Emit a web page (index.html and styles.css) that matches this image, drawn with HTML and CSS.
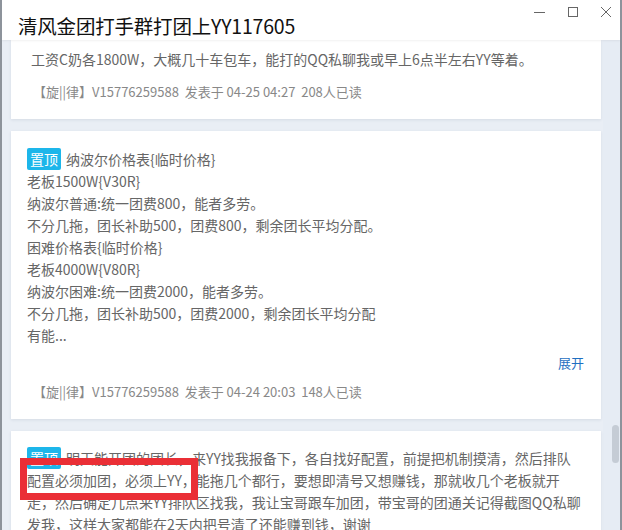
FILE: index.html
```html
<!DOCTYPE html>
<html lang="zh-CN">
<head>
<meta charset="utf-8">
<title>清风金团打手群打团上YY117605</title>
<link rel="stylesheet" href="styles.css">
</head>
<body>
<div class="window">
  <header class="titlebar">
    <div class="title">清风金团打手群打团上YY117605</div>
    <div class="controls">
      <svg class="ctl" width="14" height="14" viewBox="0 0 14 14"><path d="M1 7.5H12" stroke="#666" stroke-width="1" fill="none"/></svg>
      <svg class="ctl" width="14" height="14" viewBox="0 0 14 14"><rect x="2.5" y="2.5" width="9" height="9" stroke="#666" stroke-width="1" fill="none"/></svg>
      <svg class="ctl" width="14" height="14" viewBox="0 0 14 14"><path d="M2 2L12 12M12 2L2 12" stroke="#666" stroke-width="1" fill="none"/></svg>
    </div>
  </header>
  <div class="main">
    <div class="feed">
      <article class="card card-cut">
        <div class="text">工资C奶各1800W，大概几十车包车，能打的QQ私聊我或早上6点半左右YY等着。</div>
        <div class="meta">【旋||律】V15776259588&nbsp;&nbsp;发表于 04-25 04:27&nbsp;&nbsp;208人已读</div>
      </article>
      <article class="card">
        <div class="text">
          <div><span class="badge">置顶</span>纳波尔价格表{临时价格}</div>
          <div>老板1500W{V30R}</div>
          <div>纳波尔普通:统一团费800，能者多劳。</div>
          <div>不分几拖，团长补助500，团费800，剩余团长平均分配。</div>
          <div>困难价格表{临时价格}</div>
          <div>老板4000W{V80R}</div>
          <div>纳波尔困难:统一团费2000，能者多劳。</div>
          <div>不分几拖，团长补助500，团费2000，剩余团长平均分配</div>
          <div>有能...</div>
        </div>
        <div class="expand-row"><a class="expand">展开</a></div>
        <div class="meta meta-after">【旋||律】V15776259588&nbsp;&nbsp;发表于 04-24 20:03&nbsp;&nbsp;148人已读</div>
      </article>
      <article class="card card-last">
        <div class="text">
          <div><span class="badge">置顶</span>明天能开团的团长，来YY找我报备下，各自找好配置，前提把机制摸清，然后排队</div>
          <div>配置必须加团，必须上YY，能拖几个都行，要想即清号又想赚钱，那就收几个老板就开</div>
          <div>走，然后确定几点来YY排队区找我，我让宝哥跟车加团，带宝哥的团通关记得截图QQ私聊</div>
          <div>发我，这样大家都能在2天内把号清了还能赚到钱，谢谢</div>
        </div>
        <div class="annot"></div>
      </article>
    </div>
    <div class="scrollbar"><div class="thumb"></div></div>
  </div>
</div>
</body>
</html>
```
FILE: styles.css
```css
* { box-sizing: border-box; }
html, body { margin: 0; padding: 0; }
body {
  width: 622px;
  height: 530px;
  overflow: hidden;
  background: #8d939b;
  font-family: "Noto Sans CJK SC", "Microsoft YaHei", "Noto Sans", sans-serif;
}
.window {
  margin-left: 2px;
  width: 618px;
  height: 530px;
  background: #e9eef5;
  display: flex;
  flex-direction: column;
  overflow: hidden;
}
.titlebar {
  height: 40px;
  flex: none;
  background: #fff;
  display: flex;
  align-items: flex-start;
  justify-content: space-between;
  position: relative;
  z-index: 2;
  box-shadow: 0 1px 2px rgba(0,0,0,0.06);
}
.title {
  padding-left: 16px;
  padding-top: 12px;
  font-size: 19.5px;
  line-height: 28px;
  color: #111;
  letter-spacing: -0.2px;
}
.controls {
  display: flex;
  gap: 19px;
  padding-top: 5px;
  padding-right: 7px;
}
.ctl { display: block; }
.main {
  flex: 1;
  display: flex;
  min-height: 0;
}
.feed {
  flex: 1;
  display: flex;
  flex-direction: column;
  gap: 12px;
  padding-left: 9px;
  padding-right: 2px;
  min-width: 0;
}
.card {
  background: #fff;
  padding: 17px 16px 17px 16px;
  box-shadow: 0 1px 3px rgba(40,60,90,0.10);
  flex: none;
}
.card-cut { padding-top: 8px; }
.card-last { position: relative; padding-top: 16px; }
.text {
  font-size: 14px;
  line-height: 22px;
  color: #666;
  white-space: nowrap;
}
.card-cut .text { padding-left: 4px; }
.badge {
  display: inline-block;
  background: #1db6ea;
  color: #fff;
  font-size: 14px;
  line-height: 22px;
  height: 22px;
  padding: 0 3px;
  border-radius: 2px;
  margin-right: 5px;
  vertical-align: top;
}
.meta {
  margin-top: 12px;
  padding-left: 6px;
  font-size: 13px;
  line-height: 20px;
  color: #888;
  white-space: nowrap;
}
.meta-after { margin-top: 8px; }
.expand-row {
  margin-top: 6px;
  display: flex;
  justify-content: flex-end;
  font-size: 13px;
  line-height: 22px;
}
.expand { color: #1f6fc1; padding-right: 1px; }
.annot {
  position: absolute;
  left: 9px;
  top: 27px;
  width: 178px;
  height: 42px;
  border: 7px solid #ea2f36;
}
.scrollbar {
  width: 17px;
  flex: none;
  background: #e6ecf4;
  display: flex;
  justify-content: flex-end;
  padding-right: 1px;
}
.thumb {
  width: 7px;
  height: 38px;
  margin-top: 385px;
  border-radius: 4px;
  background: #c5ccd5;
}
```
